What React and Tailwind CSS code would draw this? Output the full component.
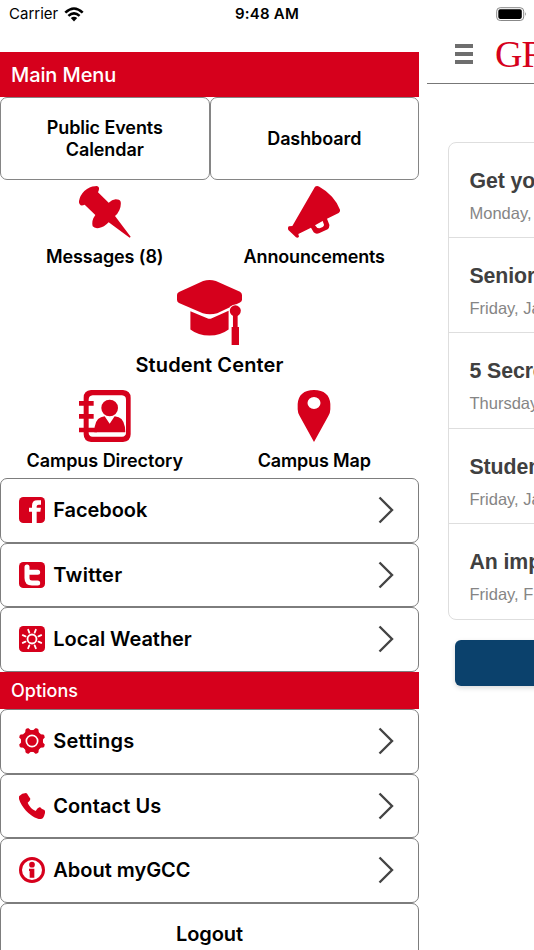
import React from "react";

const tiles = [
  { label: "Messages (8)", icon: PushPin, text: "tracking-[-0.1px]" },
  { label: "Announcements", icon: Megaphone, text: "tracking-[-0.15px]" },
];

const directoryTiles = [
  { label: "Campus Directory", icon: AddressBook, text: "tracking-[-0.05px]" },
  { label: "Campus Map", icon: MapPin, text: "tracking-[-0.15px]" },
];

const links = [
  { label: "Facebook", icon: FacebookIcon, text: "tracking-[-0.08px]" },
  { label: "Twitter", icon: TwitterIcon, text: "tracking-[0.3px]" },
  { label: "Local Weather", icon: WeatherIcon, text: "tracking-[-0.05px]" },
];

const options = [
  { label: "Settings", icon: GearIcon, text: "tracking-[0.22px]" },
  { label: "Contact Us", icon: PhoneIcon, text: "tracking-[0.07px]" },
  { label: "About myGCC", icon: InfoIcon, text: "tracking-[-0.02px]" },
];

const events = [
  { title: "Get yo", date: "Monday," },
  { title: "Senior", date: "Friday, Ja" },
  { title: "5 Secre", date: "Thursday" },
  { title: "Studen", date: "Friday, Ja" },
  { title: "An imp", date: "Friday, F" },
];

const angles = [0, 45, 90, 135, 180, 225, 270, 315];

function PushPin() {
  return (
    <svg viewBox="237 288 156 156" className="h-[52px] w-[52px] fill-[#d6001c]">
      <path d="M285 289Q294 286 297 293Q298 299 294 307L326 338Q336 329 347 328Q359 328 362 335Q364 348 358 361Q353 372 345 378L392 440L389 443L326 397Q312 412 297 414Q283 416 278 409Q275 397 280 385L286 375L254 344Q248 347 242 346Q236 342 237 333Q240 316 253 303Q269 289 285 289Z" />
    </svg>
  );
}

function Megaphone() {
  return (
    <svg viewBox="234 288 156 156" className="h-[52px] w-[52px] fill-[#d6001c]">
      <path
        fillRule="evenodd"
        d="M315 290Q321 286 328 290Q350 302 366 320Q383 339 390 359Q391 366 386 369L351 386L358 404Q359 412 353 418L327 430Q317 433 311 427L303 413L265 432L267 440Q263 445 258 442L235 420Q232 412 237 409L247 408ZM315 406Q321 416 329 415L338 411Q344 408 341 401L338 393Z"
      />
    </svg>
  );
}

function GraduationCap() {
  return (
    <svg viewBox="170 30 194 194" className="h-[65px] w-[65px] fill-[#d6001c]">
      <path d="M248 33Q267 27 286 33L358 65Q364 69 364 75V89Q364 94 358 97L290 129Q268 135 247 129L176 99Q170 96 170 90V75Q170 69 176 66Z" />
      <path d="M210 123L262 145Q268 147 274 144L324 122V178Q300 196 267 196Q233 196 210 178Z" />
      <circle cx="344" cy="122" r="19" className="fill-white" />
      <circle cx="344" cy="122" r="16.500" />
      <path d="M337 132H351V170H355V224H333V170H337Z" />
    </svg>
  );
}

function AddressBook() {
  return (
    <svg viewBox="236 30 156 156" className="h-[52px] w-[52px] fill-[#d6001c]">
      <path
        fillRule="evenodd"
        d="M272 30H368Q391 32 391 53V163Q391 184 368 186H272Q250 184 250 163V53Q250 32 272 30ZM277 46Q265 47 265 59V158Q265 169 277 170H365Q377 169 377 158V59Q377 47 365 46Z"
      />
      <path d="M236 63H280V77H236ZM236 102H280V116H236ZM236 143H290V157H236Z" />
      <circle cx="328" cy="84" r="25" />
      <path d="M282 157Q282 119 302 112L313 109L328 131L343 109L355 112Q374 119 375 157Z" />
    </svg>
  );
}

function MapPin() {
  return (
    <svg viewBox="174 30 156 156" className="h-[52px] w-[52px] fill-[#d6001c]">
      <path
        fillRule="evenodd"
        d="M252 186L209 108Q203 98 203 88V72Q206 31 252 30Q298 31 301 72V88Q301 98 295 108ZM252 51A19.500 18 0 1 0 252 87A19.500 18 0 1 0 252 51Z"
      />
    </svg>
  );
}

function FacebookIcon() {
  return (
    <svg viewBox="0 0 78 78" className="h-[26px] w-[26px]">
      <rect width="78" height="78" rx="13" className="fill-[#d6001c]" />
      <path
        d="M39 78V44H30V32H39V26Q39 10 55 10H66V23H59Q53 23 53 28V32H66L64 44H53V78Z"
        className="fill-white"
      />
    </svg>
  );
}

function TwitterIcon() {
  return (
    <svg viewBox="0 0 78 78" className="h-[26px] w-[26px]">
      <rect width="78" height="78" rx="13" className="fill-[#d6001c]" />
      <path
        d="M24 15V48Q24 63 39 63H56M24 31H56"
        className="fill-none stroke-white stroke-[15]"
        strokeLinecap="round"
      />
    </svg>
  );
}

function WeatherIcon() {
  return (
    <svg viewBox="0 0 78 78" className="h-[26px] w-[26px]">
      <rect width="78" height="78" rx="13" className="fill-[#d6001c]" />
      <g className="fill-none stroke-white stroke-[5.500]" strokeLinecap="round">
        <circle cx="39" cy="39" r="13.500" />
        {angles.map((a) => (
          <path key={a} d="M39 18V9" transform={`rotate(${a + 22.5} 39 39)`} />
        ))}
      </g>
    </svg>
  );
}

function GearIcon() {
  return (
    <svg viewBox="0 0 78 78" className="h-[26px] w-[26px] fill-[#d6001c]">
      <circle cx="39" cy="39" r="33" />
      {angles.map((a) => (
        <path
          key={a}
          d="M28 12L34 0Q39 -3 44 0L50 12Z"
          transform={`rotate(${a + 22.5} 39 39)`}
        />
      ))}
      <circle cx="39" cy="39" r="17" className="stroke-white stroke-[5]" />
    </svg>
  );
}

function PhoneIcon() {
  return (
    <svg viewBox="58 218 78 78" className="h-[26px] w-[26px] fill-[#d6001c]">
      <path d="M59 227Q67 218 79 218Q83 219 85 225L92 235Q93 240 84 247Q90 263 108 272Q113 263 119 261Q123 261 126 265L134 269Q137 272 136 278Q134 287 130 293Q124 298 115 295Q95 288 79 271Q63 253 58 236Q57 230 59 227Z" />
    </svg>
  );
}

function InfoIcon() {
  return (
    <svg viewBox="0 0 78 78" className="h-[26px] w-[26px] fill-[#d6001c]">
      <circle cx="39" cy="39" r="34.500" className="fill-none stroke-[#d6001c] stroke-[9]" />
      <circle cx="39" cy="23" r="8.500" />
      <path d="M30 35H46V62H32V42H30Z" />
    </svg>
  );
}

function Chevron() {
  return (
    <svg viewBox="0 0 16 28" className="ml-auto h-7 w-4 fill-none stroke-[#444] stroke-[2.400]">
      <path d="M1.500 1.500L14 14L1.500 26.500" />
    </svg>
  );
}

function Tile({ item }) {
  const Icon = item.icon;
  return (
    <div className="flex w-1/2 flex-col items-center">
      <Icon />
      <span className={`mt-[7px] text-[18px] leading-6 font-semibold ${item.text}`}>
        {item.label}
      </span>
    </div>
  );
}

function MenuRow({ item }) {
  const Icon = item.icon;
  return (
    <div className="flex h-[64.500px] items-center rounded-[7px] border border-[#7d7d7d] pr-[24px] pl-[18.300px]">
      <Icon />
      <span className={`ml-2 text-[20px] font-semibold ${item.text}`}>{item.label}</span>
      <Chevron />
    </div>
  );
}

function StatusBar() {
  return (
    <div className="flex h-7 items-center justify-between pr-[7px] pl-[9px]">
      <div className="flex w-24 items-center gap-1.5">
        <span className="text-[15px]">Carrier</span>
        <svg viewBox="0 0 20 15" className="h-[15px] w-5 fill-none stroke-black stroke-[2.600]">
          <path d="M1.300 5.600Q10 -2.600 18.700 5.600M4.400 8.900Q10 3.900 15.600 8.900" />
          <path d="M6.800 11.100Q10 8.600 13.200 11.100L10 14.400Z" className="fill-black stroke-none" />
        </svg>
      </div>
      <span className="mr-[2px] text-[15px] font-semibold tracking-[0.25px]">9:48 AM</span>
      <div className="flex w-24 justify-end">
        <svg viewBox="0 0 31 14" className="h-[14px] w-[31px]">
          <rect x="0.700" y="0.700" width="27" height="12.800" rx="3.500" className="fill-none stroke-[#888]" />
          <rect x="2.300" y="2.300" width="23.500" height="9.600" rx="1.800" />
          <path d="M29 5Q30.800 7 29 9Z" className="fill-[#888]" />
        </svg>
      </div>
    </div>
  );
}

function App() {
  return (
    <div className="h-[950px] w-[534px] overflow-hidden bg-white font-['Inter',sans-serif] text-black">
      <StatusBar />
      <div className="flex">
        <div className="w-[419px] shrink-0 pt-6">
          <div className="flex h-[45px] items-center bg-[#d6001c] pl-[11px] text-[20px] font-medium tracking-[-0.1px] text-white">
            Main Menu
          </div>
          <div className="flex h-[83px] text-center text-[18px] leading-[21.500px] font-semibold tracking-[-0.1px]">
            <div className="flex w-1/2 items-center justify-center rounded-[7px] border border-[#858585]">
              <span>
                Public Events
                <br />
                Calendar
              </span>
            </div>
            <div className="flex w-1/2 items-center justify-center rounded-[7px] border border-[#858585]">
              Dashboard
            </div>
          </div>
          <div className="flex h-[100px] pt-[6px]">
            {tiles.map((t) => (
              <Tile key={t.label} item={t} />
            ))}
          </div>
          <div className="flex h-[110px] flex-col items-center">
            <GraduationCap />
            <span className="mt-[5px] text-[20px] leading-[31px] font-semibold tracking-[0.12px]">
              Student Center
            </span>
          </div>
          <div className="flex h-[88px]">
            {directoryTiles.map((t) => (
              <Tile key={t.label} item={t} />
            ))}
          </div>
          {links.map((l) => (
            <MenuRow key={l.label} item={l} />
          ))}
          <div className="flex h-[37.500px] items-center bg-[#d6001c] pl-[11px] text-[18px] font-medium text-white">
            Options
          </div>
          {options.map((o) => (
            <MenuRow key={o.label} item={o} />
          ))}
          <div className="flex h-[64.500px] items-center justify-center rounded-[7px] border border-[#7d7d7d] pb-px text-[20px] font-semibold tracking-[-0.1px]">
            Logout
          </div>
        </div>

        <div className="ml-2 w-[107px] overflow-hidden font-['Liberation_Sans',sans-serif] whitespace-nowrap">
          <div className="flex h-14 border-b-[1.500px] border-[#777] pl-7">
            <div className="mt-[15.500px] flex shrink-0 flex-col gap-[4px]">
              <div className="h-[4px] w-[18px] bg-[#6e6e6e]" />
              <div className="h-[4px] w-[18px] bg-[#6e6e6e]" />
              <div className="h-[4px] w-[18px] bg-[#6e6e6e]" />
            </div>
            <span className="ml-[22px] pt-[8px] font-['Liberation_Serif',serif] text-[38px] leading-9 tracking-[-1px] text-[#d6001c]">
              GR
            </span>
          </div>
          <div className="mt-[58px] ml-[20.500px] w-[200px] rounded-[8px] border-[1.500px] border-[#dedede]">
            {events.map((e, i) => (
              <div
                key={i}
                className="h-[95.200px] border-b-[1.500px] border-[#dedede] pl-[21px] last:border-b-0"
              >
                <div className="pt-[26px] text-[21.300px] leading-6 font-bold tracking-[-0.1px] text-[#404040]">
                  {e.title}
                </div>
                <div className="mt-[10px] text-[16.500px] leading-5 text-[#858585]">{e.date}</div>
              </div>
            ))}
          </div>
          <div className="mt-[20px] ml-7 h-[46px] w-[200px] rounded-[6px] bg-[#0b416c] shadow-[0_2px_5px_rgba(0,0,0,0.15)]" />
        </div>
      </div>
    </div>
  );
}

export default App;
